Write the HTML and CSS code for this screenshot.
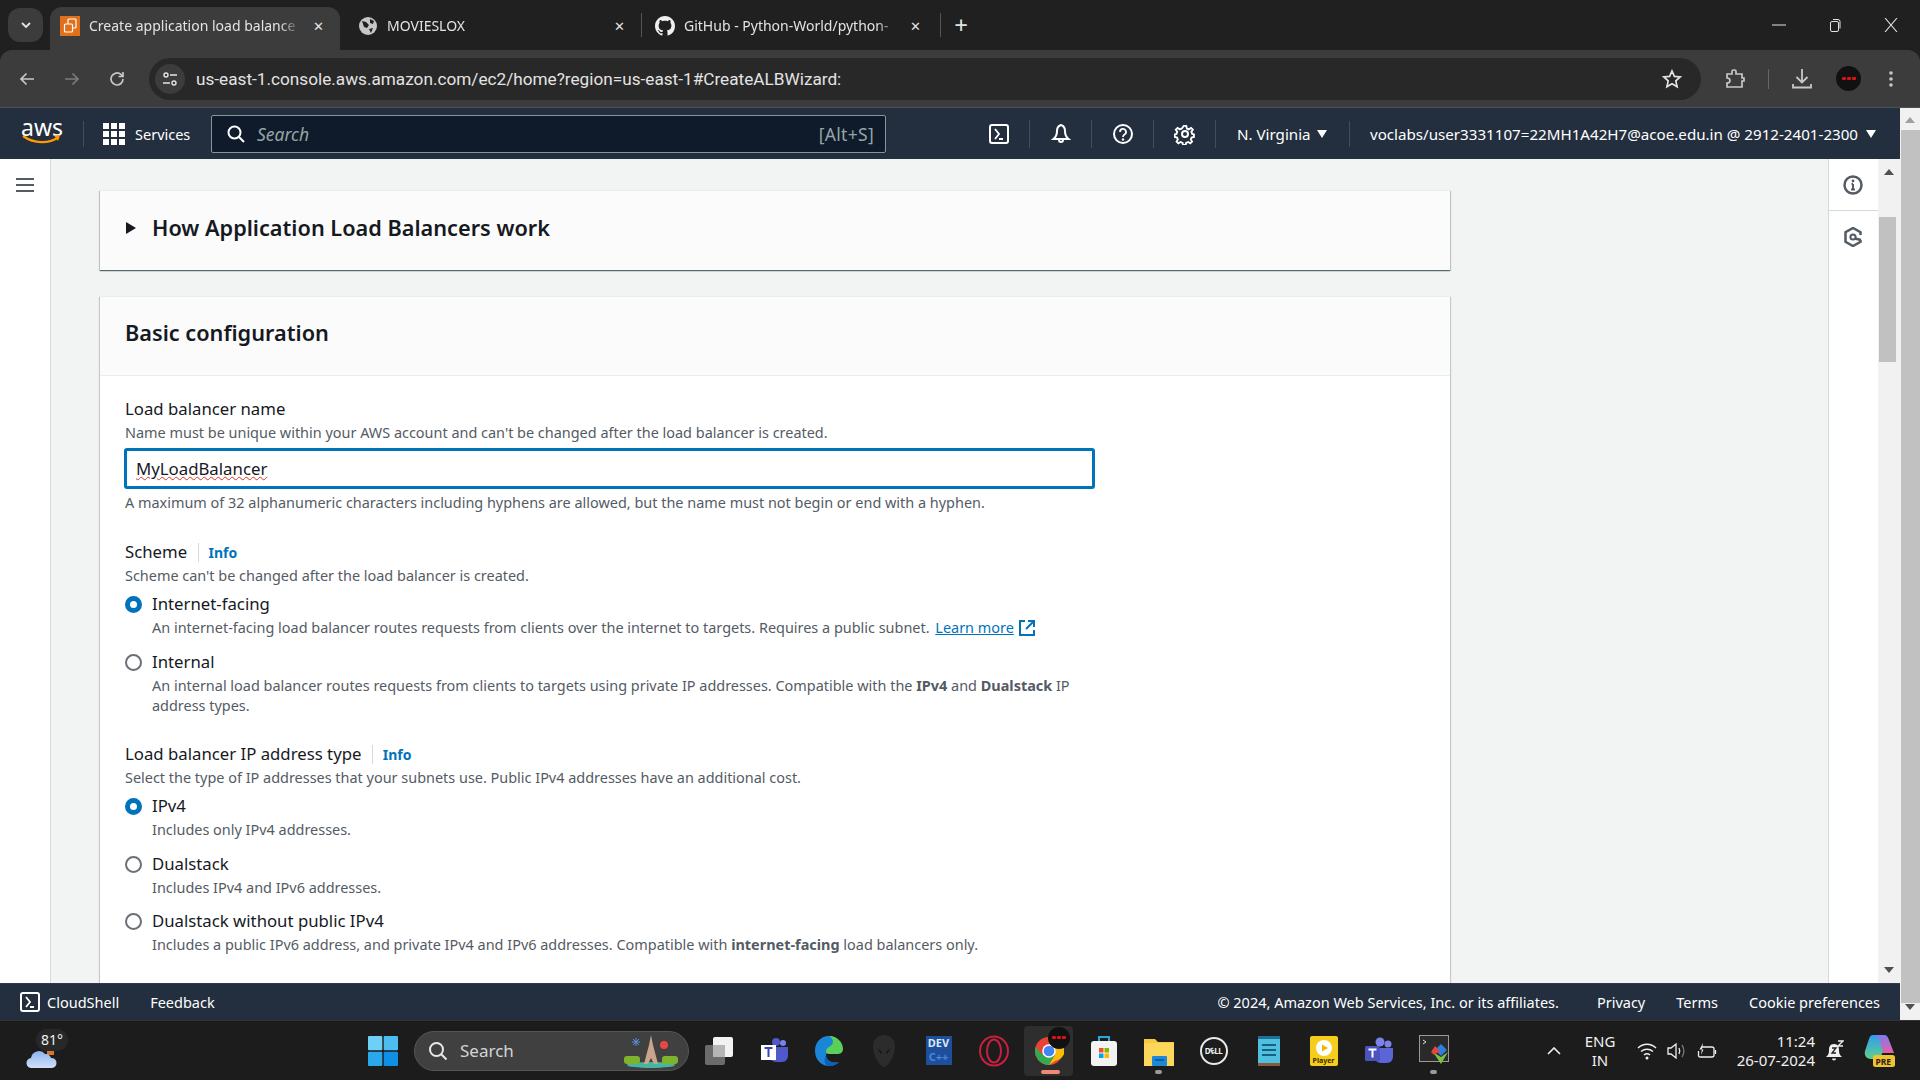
FILE: index.html
```html
<!DOCTYPE html>
<html lang="en">
<head>
    <meta charset="UTF-8">
    <title>Create application load balancer</title>
    <link rel="stylesheet" href="styles.css">
</head>
<body>
    <!-- browser tabs -->
    <div class="tabstrip">
        <div class="tab-search"><svg width="12" height="12" viewBox="0 0 12 12"><path d="M2 4l4 4 4-4" fill="none" stroke="#e3e3e3" stroke-width="1.8"/></svg></div>
        <div class="tab tab-active">
            <svg class="tab-icon" width="20" height="20" viewBox="0 0 20 20"><rect width="20" height="20" fill="#e0701a"/><rect x="8" y="3" width="8" height="9" rx="1" fill="none" stroke="#fff" stroke-width="1.2"/><rect x="4.5" y="8" width="8" height="8" rx="1" fill="#e0701a" stroke="#fff" stroke-width="1.2"/></svg>
            <span class="tab-title">Create application load balance</span>
            <span class="tab-close">✕</span>
        </div>
        <div class="tab tab-second">
            <svg class="tab-icon" width="20" height="20" viewBox="0 0 20 20"><circle cx="10" cy="10" r="9" fill="#c4c7c5"/><path d="M4 5l4 1 3 3-2 3-3-1zM12 3l4 2-1 3-3-1zM11 13l4-1-2 5z" fill="#202020"/></svg>
            <span class="tab-title">MOVIESLOX</span>
            <span class="tab-close">✕</span>
        </div>
        <div class="tab-sep"></div>
        <div class="tab tab-narrow">
            <svg class="tab-icon" width="20" height="20" viewBox="0 0 16 16"><path fill="#f0f0f0" d="M8 0C3.58 0 0 3.58 0 8c0 3.54 2.29 6.53 5.47 7.59.4.07.55-.17.55-.38 0-.19-.01-.82-.01-1.49-2.01.37-2.53-.49-2.69-.94-.09-.23-.48-.94-.82-1.13-.28-.15-.68-.52-.01-.53.63-.01 1.08.58 1.23.82.72 1.21 1.87.87 2.33.66.07-.52.28-.87.51-1.07-1.78-.2-3.64-.89-3.64-3.95 0-.87.31-1.59.82-2.15-.08-.2-.36-1.02.08-2.12 0 0 .67-.21 2.2.82.64-.18 1.32-.27 2-.27s1.36.09 2 .27c1.53-1.04 2.2-.82 2.2-.82.44 1.1.16 1.92.08 2.12.51.56.82 1.27.82 2.15 0 3.07-1.87 3.75-3.65 3.95.29.25.54.73.54 1.48 0 1.07-.01 1.93-.01 2.2 0 .21.15.46.55.38A8 8 0 0 0 16 8c0-4.42-3.58-8-8-8z"/></svg>
            <span class="tab-title">GitHub - Python-World/python-</span>
            <span class="tab-close">✕</span>
        </div>
        <div class="tab-sep"></div>
        <div class="tab-new">+</div>
        <div class="window-btns">
            <svg width="14" height="14" viewBox="0 0 14 14"><path d="M0 7h14" stroke="#e3e3e3"/></svg>
            <svg width="14" height="14" viewBox="0 0 14 14"><rect x="2.5" y="3.5" width="8" height="10" rx="1.5" fill="none" stroke="#e3e3e3"/><path d="M5 1.5h5a2 2 0 0 1 2 2v7" fill="none" stroke="#e3e3e3"/></svg>
            <svg width="14" height="14" viewBox="0 0 14 14"><path d="M1 0l12 14M13 0L1 14" stroke="#e3e3e3" stroke-width="1.1"/></svg>
        </div>
    </div>

    <!-- address bar -->
    <div class="toolbar">
        <svg class="tool-btn" width="18" height="18" viewBox="0 0 18 18"><path d="M16 9H3M8.5 3.5L3 9l5.5 5.5" fill="none" stroke="#c7c7c7" stroke-width="1.7"/></svg>
        <svg class="tool-btn" width="18" height="18" viewBox="0 0 18 18"><path d="M2 9h13M9.5 3.5L15 9l-5.5 5.5" fill="none" stroke="#7c7c7c" stroke-width="1.7"/></svg>
        <svg class="tool-btn" width="18" height="18" viewBox="0 0 18 18"><path d="M15 9a6 6 0 1 1-2-4.5L15 6.5M15 2v4.5h-4.5" fill="none" stroke="#c7c7c7" stroke-width="1.7"/></svg>
        <div class="urlbar">
            <div class="url-chip"><svg width="16" height="16" viewBox="0 0 16 16"><circle cx="4" cy="4" r="2" fill="none" stroke="#e3e3e3" stroke-width="1.4"/><path d="M8 4h7M1 12h7" stroke="#e3e3e3" stroke-width="1.4"/><circle cx="12" cy="12" r="2" fill="none" stroke="#e3e3e3" stroke-width="1.4"/></svg></div>
            <span class="url-text">us-east-1.console.aws.amazon.com/ec2/home?region=us-east-1#CreateALBWizard:</span>
            <svg class="url-star" width="20" height="20" viewBox="0 0 20 20"><path d="M10 2l2.4 5.4 5.8.6-4.4 3.9 1.3 5.8L10 14.7l-5.1 3 1.3-5.8L1.800 8l5.800-.6z" fill="none" stroke="#e3e3e3" stroke-width="1.7"/></svg>
        </div>
        <svg class="ext-icon" width="20" height="22" viewBox="0 0 20 22"><path d="M2 6h5V3.500a1.500 1.500 0 0 1 1.500-1.500h1A1.500 1.500 0 0 1 11 3.500V6h6v4h2v3h-2v6H2v-4c2 0 3-1 3-2.500S4 10 2 10z" fill="none" stroke="#c7c7c7" stroke-width="1.700"/></svg>
        <div class="tool-sep"></div>
        <svg class="dl-icon" width="20" height="22" viewBox="0 0 20 22"><path d="M10 1v13M4.500 9l5.500 5.500L15.500 9M1 16v3.500h18V16" fill="none" stroke="#c7c7c7" stroke-width="1.800"/></svg>
        <div class="avatar"><i></i><i></i><i></i></div>
        <svg class="menu-icon" width="4" height="18" viewBox="0 0 4 18"><circle cx="2" cy="3" r="1.800" fill="#c7c7c7"/><circle cx="2" cy="9" r="1.800" fill="#c7c7c7"/><circle cx="2" cy="15" r="1.800" fill="#c7c7c7"/></svg>
    </div>

    <div class="viewport">
        <div class="console">
            <!-- aws top nav -->
            <nav class="topnav">
                <div class="aws-logo">
                    <span>aws</span>
                    <svg width="40" height="10" viewBox="0 0 40 10"><path d="M1 1c11 8 26 8 36 1" fill="none" stroke="#f90" stroke-width="2.200"/><path d="M32 0.500l6-.5-2 6z" fill="#f90"/></svg>
                </div>
                <div class="nav-sep nav-sep-logo"></div>
                <div class="services">
                    <svg width="22" height="22" viewBox="0 0 22 22" fill="#fff"><rect width="6" height="6"/><rect x="8" width="6" height="6"/><rect x="16" width="6" height="6"/><rect y="8" width="6" height="6"/><rect x="8" y="8" width="6" height="6"/><rect x="16" y="8" width="6" height="6"/><rect y="16" width="6" height="6"/><rect x="8" y="16" width="6" height="6"/><rect x="16" y="16" width="6" height="6"/></svg>
                    <span>Services</span>
                </div>
                <div class="nav-search">
                    <svg width="18" height="18" viewBox="0 0 18 18"><circle cx="7.500" cy="7.500" r="6" fill="none" stroke="#fff" stroke-width="2"/><path d="M12 12l5 5" stroke="#fff" stroke-width="2"/></svg>
                    <span class="search-text">Search</span>
                    <span class="search-key">[Alt+S]</span>
                </div>
                <div class="nav-icon"><svg width="20" height="20" viewBox="0 0 20 20"><rect x="1" y="1" width="18" height="18" rx="2" fill="none" stroke="#fff" stroke-width="2"/><path d="M6 5l4 5-4 5M10 15h4" fill="none" stroke="#fff" stroke-width="1.800"/></svg></div>
                <div class="nav-icon"><svg width="20" height="22" viewBox="0 0 20 22"><path d="M10 2c-3 1-4 3-4 6 0 4-1 6-3.500 8h15C15 14 14 12 14 8c0-3-1-5-4-6zM8 17a2 2 0 0 0 4 0" fill="none" stroke="#fff" stroke-width="2"/></svg></div>
                <div class="nav-icon"><svg width="20" height="20" viewBox="0 0 20 20"><circle cx="10" cy="10" r="9" fill="none" stroke="#fff" stroke-width="2"/><path d="M7 8a3 3 0 1 1 4.500 2.500c-1 .6-1.500 1-1.500 2.500" fill="none" stroke="#fff" stroke-width="1.800"/><circle cx="10" cy="15.500" r="1.200" fill="#fff"/></svg></div>
                <div class="nav-icon"><svg width="22" height="22" viewBox="0 0 22 22"><circle cx="11" cy="11" r="3" fill="none" stroke="#fff" stroke-width="2"/><path d="M9.500 1.500h3l.6 3 2.400 1 2.600-1.700 2.100 2.100-1.700 2.600 1 2.400 2 .6v3l-2.700.6-1 2.400 1.500 2.400-2.100 2.100-2.500-1.600-2.400 1-.6 2.600h-3l-.6-2.600-2.400-1-2.500 1.600-2.100-2.100 1.500-2.400-1-2.400-2.700-.6v-3l2-.6 1-2.400-1.700-2.600 2.100-2.100 2.600 1.700 2.400-1z" transform="translate(1.650 1.650) scale(.85)" fill="none" stroke="#fff" stroke-width="2.200"/></svg></div>
                <div class="nav-drop nav-region"><span>N. Virginia</span><i class="caret"></i></div>
                <div class="nav-sep"></div>
                <div class="nav-drop nav-user"><span>voclabs/user3331107=22MH1A42H7@acoe.edu.in @ 2912-2401-2300</span><i class="caret"></i></div>
            </nav>

            <div class="console-body">
                <aside class="left-rail">
                    <svg width="18" height="16" viewBox="0 0 18 16"><path d="M0 2h18M0 8h18M0 14h18" stroke="#545b64" stroke-width="2"/></svg>
                </aside>
                <main class="content">
                    <section class="card card-collapsed">
                        <i class="arrow-right"></i>
                        <h2>How Application Load Balancers work</h2>
                    </section>
                    <section class="card">
                        <header class="card-head"><h2>Basic configuration</h2></header>
                        <div class="card-body">
                            <div class="field-label">Load balancer name</div>
                            <div class="field-desc">Name must be unique within your AWS account and can't be changed after the load balancer is created.</div>
                            <div class="text-input"><span class="misspelled">MyLoadBalancer</span></div>
                            <div class="field-hint">A maximum of 32 alphanumeric characters including hyphens are allowed, but the name must not begin or end with a hyphen.</div>

                            <div class="field-label group-label">Scheme <a class="info">Info</a></div>
                            <div class="field-desc">Scheme can't be changed after the load balancer is created.</div>
                            <div class="radio-row radio-first">
                                <i class="radio radio-on"></i>
                                <div>
                                    <div class="radio-label">Internet-facing</div>
                                    <div class="radio-desc">An internet-facing load balancer routes requests from clients over the internet to targets. Requires a public subnet. <a class="learn">Learn more</a> <svg class="ext-link" width="18" height="18" viewBox="0 0 18 18"><path d="M7 2H2v14h14v-5M10 2h6v6M16 2L8 10" fill="none" stroke="#0073bb" stroke-width="2"/></svg></div>
                                </div>
                            </div>
                            <div class="radio-row">
                                <i class="radio"></i>
                                <div>
                                    <div class="radio-label">Internal</div>
                                    <div class="radio-desc">An internal load balancer routes requests from clients to targets using private IP addresses. Compatible with the <b>IPv4</b> and <b>Dualstack</b> IP address types.</div>
                                </div>
                            </div>

                            <div class="field-label group-label-2">Load balancer IP address type <a class="info">Info</a></div>
                            <div class="field-desc">Select the type of IP addresses that your subnets use. Public IPv4 addresses have an additional cost.</div>
                            <div class="radio-row radio-first">
                                <i class="radio radio-on"></i>
                                <div>
                                    <div class="radio-label">IPv4</div>
                                    <div class="radio-desc">Includes only IPv4 addresses.</div>
                                </div>
                            </div>
                            <div class="radio-row">
                                <i class="radio"></i>
                                <div>
                                    <div class="radio-label">Dualstack</div>
                                    <div class="radio-desc">Includes IPv4 and IPv6 addresses.</div>
                                </div>
                            </div>
                            <div class="radio-row">
                                <i class="radio"></i>
                                <div>
                                    <div class="radio-label">Dualstack without public IPv4</div>
                                    <div class="radio-desc">Includes a public IPv6 address, and private IPv4 and IPv6 addresses. Compatible with <b>internet-facing</b> load balancers only.</div>
                                </div>
                            </div>
                        </div>
                    </section>
                </main>
                <aside class="right-rail">
                    <div class="rail-btn rail-btn-first"><svg width="20" height="20" viewBox="0 0 20 20"><circle cx="10" cy="10" r="8.500" fill="none" stroke="#545b64" stroke-width="2.500"/><circle cx="10" cy="6" r="1.400" fill="#545b64"/><path d="M10 9v5M8 14.500h4M8.500 9H10" stroke="#545b64" stroke-width="2"/></svg></div>
                    <div class="rail-btn"><svg width="18" height="20" viewBox="0 0 18 20"><path d="M16.500 13v1.800L9 19l-7.500-4.200V5.200L9 1l7.500 4.200V8" fill="none" stroke="#545b64" stroke-width="2.500"/><circle cx="9" cy="10" r="2.600" fill="none" stroke="#545b64" stroke-width="2"/><path d="M11 11.500l6 1.500" stroke="#545b64" stroke-width="2.400"/></svg></div>
                </aside>
                <div class="inner-scroll">
                    <i class="sb-up"></i>
                    <div class="inner-thumb"></div>
                    <i class="sb-down"></i>
                </div>
            </div>

            <footer class="console-foot">
                <svg width="20" height="20" viewBox="0 0 20 20"><rect x="1" y="1" width="18" height="18" rx="2" fill="none" stroke="#fff" stroke-width="2"/><path d="M6 5l4 5-4 5M10 15h4" fill="none" stroke="#fff" stroke-width="1.800"/></svg>
                <span class="foot-shell">CloudShell</span>
                <span class="foot-feedback">Feedback</span>
                <span class="foot-copy">© 2024, Amazon Web Services, Inc. or its affiliates.</span>
                <span class="foot-link foot-privacy">Privacy</span>
                <span class="foot-link">Terms</span>
                <span class="foot-link foot-last">Cookie preferences</span>
            </footer>
        </div>
        <div class="outer-scroll">
            <i class="sb-up"></i>
            <div class="outer-thumb"></div>
            <i class="sb-down"></i>
        </div>
    </div>

    <!-- windows taskbar -->
    <div class="taskbar">
        <div class="weather">
            <svg width="32" height="20" viewBox="0 0 32 20"><defs><linearGradient id="cloudFill" x1="0" y1="0" x2="0" y2="1"><stop offset="0" stop-color="#8fb4ee"/><stop offset="1" stop-color="#cfe0fa"/></linearGradient></defs><rect x="21" y="0" width="7" height="6" fill="#d9762b"/><path d="M6 19a5 5 0 0 1-1-10 8 8 0 0 1 14-4 6 6 0 0 1 6 4 5 5 0 0 1 1 10z" fill="url(#cloudFill)"/></svg>
            <span class="weather-temp">81°</span>
        </div>
        <svg class="win-logo" width="30" height="30" viewBox="0 0 30 30"><rect width="14.300" height="14.300" rx="1" fill="#6fd0f5"/><rect x="15.700" width="14.300" height="14.300" rx="1" fill="#4dbdf0"/><rect y="15.700" width="14.300" height="14.300" rx="1" fill="#2aa8ec"/><rect x="15.700" y="15.700" width="14.300" height="14.300" rx="1" fill="#0f8fe6"/></svg>
        <div class="task-search">
            <svg width="20" height="20" viewBox="0 0 20 20"><circle cx="8.500" cy="8.500" r="6.500" fill="none" stroke="#e8e8e8" stroke-width="2"/><path d="M13 13l5.500 5.500" stroke="#e8e8e8" stroke-width="2"/></svg>
            <span>Search</span>
            <svg class="doodle" width="56" height="34" viewBox="0 0 56 34"><ellipse cx="28" cy="31" rx="24" ry="3" fill="#48b5a0"/><rect x="1" y="22" width="16" height="8" rx="3" fill="#7fb32e"/><rect x="39" y="22" width="16" height="8" rx="3" fill="#7fb32e"/><path d="M28 1l2 10 5 19h-4l-3-6-3 6h-4l5-19z" fill="#c9a58c"/><path d="M9 8h8M13 4v8M10 5l6 6M16 5l-6 6" stroke="#5b8fd8" stroke-width="1"/><circle cx="41" cy="11" r="4" fill="#ef4444"/></svg>
        </div>
        <div class="task-apps">
            <div class="app"><svg width="30" height="30" viewBox="0 0 30 30"><rect x="1" y="9" width="20" height="20" rx="2" fill="#6b6b6b"/><rect x="9" y="1" width="20" height="20" rx="2" fill="#f2f2f2"/><rect x="9" y="9" width="12" height="12" fill="#b5b5b5"/></svg></div>
            <div class="app"><svg width="30" height="30" viewBox="0 0 30 30"><circle cx="24" cy="7" r="3" fill="#7b83eb"/><circle cx="17" cy="6" r="4" fill="#5059c9"/><path d="M10 11h19v9a6 6 0 0 1-6 6h-6a7 7 0 0 1-7-7z" fill="#5059c9"/><rect x="2" y="9" width="15" height="15" fill="#fff"/><path d="M5.500 12h8M9.500 12v9" stroke="#3b44b0" stroke-width="2"/></svg></div>
            <div class="app"><svg width="30" height="32" viewBox="0 0 30 32"><path d="M15 1C6 1 1 8 1 16c0 9 7 15 14 15 5 0 8-2 10-4-6 2-13-1-13-7 0-2 1-3 3-3h13C29 8 24 1 15 1z" fill="#1b86d8"/><path d="M15 1c8 0 14 6 14 13 0 4-3 5-6 5h-8c-2 0-3-1-3-2 0-6 7-5 7-10 0-3-2-5-4-6z" fill="#5ad05a"/><path d="M12 20c0 6 7 9 13 7-2 2-5 4-10 4-4 0-6-5-3-11z" fill="#0f5fb5"/></svg></div>
            <div class="app"><svg width="24" height="34" viewBox="0 0 24 34"><path d="M12 1c7 0 11 5 11 12 0 8-6 19-11 20C7 32 1 21 1 13 1 6 5 1 12 1z" fill="#2c2c2c"/><path d="M5 14l5 4-1 2zM19 14l-5 4 1 2z" fill="#161616"/></svg></div>
            <div class="app"><div class="dev-icon"><b>DEV</b><b class="dev-cpp">C++</b></div></div>
            <div class="app"><svg width="32" height="32" viewBox="0 0 32 32"><ellipse cx="16" cy="16" rx="14" ry="14.500" fill="none" stroke="#c8203f" stroke-width="2"/><ellipse cx="16" cy="16" rx="7" ry="11.500" fill="none" stroke="#c8203f" stroke-width="2"/></svg></div>
            <div class="app app-active">
                <svg width="30" height="30" viewBox="0 0 30 30"><circle cx="15" cy="15" r="14" fill="#e94335"/><path d="M15 15L2.900 22A14 14 0 0 0 15 29l6-10z" fill="#34a853"/><path d="M15 1h12.100a14 14 0 0 1-6 24L15 29l6-10z" fill="#fbbc05"/><path d="M1.500 11L9 19 3 22A14 14 0 0 1 1.500 11z" fill="#34a853"/><circle cx="15" cy="15" r="6.800" fill="#fff"/><circle cx="15" cy="15" r="5.300" fill="#4285f4"/></svg>
                <div class="chrome-badge"><i></i><i></i><i></i></div>
                <span class="app-bar"></span>
            </div>
            <div class="app"><svg width="28" height="32" viewBox="0 0 28 32"><path d="M9 6V2h10v4" fill="none" stroke="#29a8df" stroke-width="2"/><rect x="1" y="6" width="26" height="25" rx="3" fill="#f3f3f3"/><rect x="9" y="13" width="4.500" height="4.500" fill="#f25022"/><rect x="14.500" y="13" width="4.500" height="4.500" fill="#7fba00"/><rect x="9" y="18.500" width="4.500" height="4.500" fill="#00a4ef"/><rect x="14.500" y="18.500" width="4.500" height="4.500" fill="#ffb900"/></svg></div>
            <div class="app"><svg width="30" height="30" viewBox="0 0 30 30"><path d="M0 3h11l3 3h16v24H0z" fill="#f8c93c"/><path d="M0 7h30v23H0z" fill="#fbd75b"/><rect x="8" y="20" width="15" height="10" rx="1" fill="#1d88d6"/><path d="M11 24h9" stroke="#0c5fa5" stroke-width="2"/></svg><span class="app-dot"></span></div>
            <div class="app"><div class="dell-icon">D<span class="dell-e">E</span>LL</div></div>
            <div class="app"><svg width="24" height="32" viewBox="0 0 24 32"><rect x="1" y="1" width="22" height="29" fill="#4fc0e0"/><rect x="1" y="28" width="22" height="3" fill="#8a5a3c"/><path d="M1 1h22v3H1z" fill="#1d6f96"/><path d="M5 10h14M5 15h14M5 20h14" stroke="#1b5f80" stroke-width="2"/></svg></div>
            <div class="app"><div class="player-icon"><svg width="16" height="16" viewBox="0 0 16 16"><circle cx="8" cy="8" r="8" fill="#fff"/><path d="M6 4.500l6 3.500-6 3.500z" fill="#f2b600"/></svg><span>Player</span></div></div>
            <div class="app"><svg width="30" height="30" viewBox="0 0 30 30"><circle cx="24" cy="8" r="3.500" fill="#7b83eb"/><circle cx="16" cy="6" r="4.500" fill="#7b83eb"/><path d="M10 12h19v9a6 6 0 0 1-6 6h-6a7 7 0 0 1-7-7z" fill="#5b65d6"/><rect x="1" y="10" width="15" height="15" rx="1.500" fill="#4b53bc"/><path d="M4.500 13.500h8M8.500 13.500v8" stroke="#fff" stroke-width="2"/></svg></div>
            <div class="app"><svg width="30" height="32" viewBox="0 0 30 32"><rect x="0.500" y="0.500" width="29" height="26" fill="#2a2a2a" stroke="#999"/><path d="M4 5l3 2-3 2" fill="none" stroke="#ddd"/><path d="M22 9l6 6-6 6-6-6z" fill="#2f7de1"/><path d="M14 17l8 12 7-12-7 5z" fill="#7cc242"/><path d="M16 11l5 5-6 4-3-3z" fill="#e0483a"/></svg><span class="app-dot"></span></div>
        </div>
        <div class="tray">
            <svg class="tray-up" width="14" height="8" viewBox="0 0 14 8"><path d="M1 7l6-6 6 6" fill="none" stroke="#f0f0f0" stroke-width="1.600"/></svg>
            <div class="tray-lang">ENG<br>IN</div>
            <svg class="tray-icon" width="20" height="18" viewBox="0 0 20 18"><path d="M1 6c5-5 13-5 18 0M4 9.500c3.500-3 8.500-3 12 0M7 13c1.800-1.500 4.200-1.500 6 0" fill="none" stroke="#f0f0f0" stroke-width="1.400"/><circle cx="10" cy="16" r="1.500" fill="#f0f0f0"/></svg>
            <svg class="tray-icon" width="20" height="18" viewBox="0 0 20 18"><path d="M1 6h3l5-4v14l-5-4H1zM12 6c1 2 1 4 0 6" fill="none" stroke="#f0f0f0" stroke-width="1.300"/><path d="M15 3c2.500 3.500 2.500 8.500 0 12" fill="none" stroke="#777" stroke-width="1.300"/></svg>
            <svg class="tray-icon" width="20" height="18" viewBox="0 0 20 18"><path d="M5 5h10a2 2 0 0 1 2 2v6a2 2 0 0 1-2 2H3a1.500 1.500 0 0 1-1.500-1.500V9" fill="none" stroke="#f0f0f0" stroke-width="1.300"/><path d="M18.500 8v4" stroke="#f0f0f0" stroke-width="1.300"/><path d="M6 1L2.500 7.500h4L4 13z" fill="#f0f0f0"/></svg>
            <div class="tray-clock">11:24<br>26-07-2024</div>
            <svg class="tray-bell" width="18" height="22" viewBox="0 0 18 22"><path d="M8 4c-4 0-5 3-5 6 0 4-1 5-3 7h16c-2-2-3-3-3-7 0-3-1-6-5-6zM6 18.500a2 2 0 0 0 4 0z" fill="#f0f0f0"/><path d="M6 8h4l-4 5h4" fill="none" stroke="#222" stroke-width="1.300"/><path d="M12 1h5l-5 5h5" fill="none" stroke="#f0f0f0" stroke-width="1.300"/></svg>
            <svg class="copilot" width="32" height="34" viewBox="0 0 32 34"><defs><linearGradient id="copLeft" x1="0" y1="0" x2="0" y2="1"><stop offset="0" stop-color="#2f9cf0"/><stop offset="1" stop-color="#5fd08c"/></linearGradient><linearGradient id="copRight" x1="0" y1="0" x2="0" y2="1"><stop offset="0" stop-color="#7c7cf0"/><stop offset="1" stop-color="#e85fa8"/></linearGradient></defs><path d="M9 1h11c3 0 4 2 5 5l5 13H18L15 9z" fill="url(#copRight)"/><path d="M9 1c4 0 6 3 7 7l3 9-3 8H7c-5 0-7-4-6-8l4-12c1-3 2-4 4-4z" fill="url(#copLeft)"/><rect x="9" y="21" width="22" height="12" rx="2.500" fill="#f2c230"/><text x="11.500" y="30.500" font-size="8.500" font-weight="700" fill="#222" font-family="Noto Sans">PRE</text></svg>
        </div>
    </div>
</body>
</html>
```

FILE: styles.css
```css
* {
    box-sizing: border-box;
}
body {
    margin: 0;
    width: 1920px;
    height: 1080px;
    overflow: hidden;
    display: flex;
    flex-direction: column;
    font-family: "Noto Sans", sans-serif;
    background: #202020;
}

/* tabs */
.tabstrip {
    height: 50px;
    display: flex;
    align-items: flex-end;
    background: #202020;
    color: #e3e3e3;
    font-size: 14px;
    flex-shrink: 0;
}
.tab-search {
    width: 35px;
    height: 34px;
    margin: 0 7px 8px 8px;
    border-radius: 12px;
    background: #3c3c3c;
    display: flex;
    align-items: center;
    justify-content: center;
}
.tab {
    width: 292px;
    height: 43px;
    padding: 0 14px 6px 10px;
    display: flex;
    align-items: center;
    gap: 9px;
    border-radius: 12px 12px 0 0;
}
.tab-active {
    background: #3c3c3c;
    width: 290px;
}
.tab-second {
    width: 301px;
    padding-left: 18px;
}
.tab-narrow {
    width: 298px;
    padding-left: 13px;
    padding-right: 17px;
}
.tab-icon {
    flex-shrink: 0;
}
.tab-title {
    flex: 1;
    overflow: hidden;
    white-space: nowrap;
    -webkit-mask-image: linear-gradient(to right, #000 90%, transparent);
    mask-image: linear-gradient(to right, #000 90%, transparent);
}
.tab-close {
    font-size: 13px;
    width: 16px;
    text-align: center;
}
.tab-sep {
    width: 1px;
    height: 24px;
    margin-bottom: 13px;
    background: #555;
}
.tab-new {
    width: 40px;
    text-align: center;
    font-size: 24px;
    line-height: 30px;
    margin-bottom: 10px;
}
.window-btns {
    margin-left: auto;
    display: flex;
    align-items: center;
    gap: 42px;
    padding: 0 22px 0 0;
    height: 50px;
}

/* address bar */
.toolbar {
    height: 58px;
    flex-shrink: 0;
    background: #3c3c3c;
    border-radius: 12px 12px 0 0;
    display: flex;
    align-items: center;
    padding-left: 18px;
    border-bottom: 1px solid #4a5058;
}
.tool-btn {
    margin-right: 27px;
}
.urlbar {
    margin-left: -4px;
    width: 1552px;
    height: 42px;
    border-radius: 21px;
    background: #282828;
    display: flex;
    align-items: center;
    padding: 0 11px 0 6px;
    color: #e3e3e3;
    font-family: Roboto, sans-serif;
    font-size: 17.200px;
}
.url-chip {
    width: 30px;
    height: 30px;
    border-radius: 50%;
    background: #3c3c3c;
    display: flex;
    align-items: center;
    justify-content: center;
    margin-right: 11px;
}
.url-text {
    flex: 1;
    white-space: nowrap;
}
.url-star {
    margin-right: 8px;
}
.ext-icon {
    margin-left: 24px;
}
.tool-sep {
    width: 1px;
    height: 20px;
    background: #666;
    margin: 0 23px 0 23px;
}
.dl-icon {
    margin-right: 25px;
}
.avatar {
    width: 25px;
    height: 25px;
    border-radius: 50%;
    background: #111;
    display: flex;
    align-items: center;
    justify-content: center;
    gap: 1px;
    margin-right: 28px;
    margin-left: -1px;
}
.avatar i,
.chrome-badge i {
    width: 4px;
    height: 3px;
    background: #d11;
    border-radius: 1px;
}

/* console frame */
.viewport {
    flex: 1;
    display: flex;
    min-height: 0;
}
.console {
    width: 1900px;
    display: flex;
    flex-direction: column;
}
.topnav {
    height: 51px;
    flex-shrink: 0;
    background: #232f3e;
    color: #fff;
    display: flex;
    align-items: center;
    font-size: 15.150px;
}
.aws-logo {
    width: 42px;
    margin-left: 21px;
    display: flex;
    flex-direction: column;
    align-items: center;
    line-height: 20px;
    font-size: 23px;
    height: 34px;
}
.aws-logo svg {
    margin-top: -2px;
}
.nav-sep {
    width: 1px;
    height: 26px;
    background: #414d5c;
}
.nav-sep-logo {
    margin: 0 19px 0 20px;
}
.services {
    display: flex;
    align-items: center;
    gap: 10px;
    width: 108px;
    font-size: 14.500px;
}
.nav-search {
    width: 675px;
    height: 38px;
    background: #0f1b2a;
    border: 1px solid #879596;
    border-radius: 2px;
    display: flex;
    align-items: center;
    padding: 0 11px 0 15px;
    color: #95a5a6;
    font-size: 17.500px;
    margin-right: 82px;
}
.search-text {
    font-style: italic;
    margin-left: 12px;
    flex: 1;
}
.search-key {
    font-size: 17.500px;
    letter-spacing: 0.3px;
}
.nav-icon {
    width: 62px;
    display: flex;
    justify-content: center;
    border-right: 1px solid #414d5c;
    height: 28px;
    align-items: center;
}
.nav-drop {
    display: flex;
    align-items: center;
    gap: 6px;
}
.nav-region {
    width: 133px;
    padding-left: 21px;
}
.nav-user {
    padding-left: 20px;
    gap: 8px;
}
.caret {
    width: 0;
    height: 0;
    border-left: 5px solid transparent;
    border-right: 5px solid transparent;
    border-top: 8px solid #fff;
}

.console-body {
    flex: 1;
    display: flex;
    min-height: 0;
    background: #f2f3f3;
}
.left-rail {
    width: 51px;
    background: #fff;
    border-right: 1px solid #d5dbdb;
    padding: 17px 0 0 16px;
    flex-shrink: 0;
}
.content {
    width: 1777px;
    padding: 31px 0 0 49px;
    overflow: hidden;
}
.right-rail {
    width: 50px;
    flex-shrink: 0;
    background: #fff;
    border-left: 1px solid #d5dbdb;
}
.rail-btn {
    height: 51px;
    padding-right: 1px;
    display: flex;
    align-items: center;
    justify-content: center;
}
.rail-btn-first {
    border-bottom: 1px solid #d5dbdb;
    height: 52px;
}
.inner-scroll,
.outer-scroll {
    background: #f1f1f1;
    display: flex;
    flex-direction: column;
    align-items: center;
}
.inner-scroll {
    width: 22px;
}
.outer-scroll {
    width: 20px;
    height: 912px;
}
.inner-thumb {
    width: 17px;
    height: 145px;
    background: #c1c1c1;
    margin: 42px 3px 0 0;
}
.outer-thumb {
    width: 19px;
    height: 873px;
    background: #c1c1c1;
    margin: 7px 0 0 1px;
}
.sb-up,
.sb-down {
    width: 0;
    height: 0;
    border-left: 5px solid transparent;
    border-right: 5px solid transparent;
}
.sb-up {
    border-bottom: 6px solid #505050;
    margin-top: 10px;
}
.sb-down {
    border-top: 6px solid #505050;
    margin-top: auto;
    margin-bottom: 10px;
}
.outer-scroll .sb-up {
    border-bottom-color: #a0a0a0;
    margin-top: 9px;
}

/* cards */
.card {
    width: 1350px;
    background: #fff;
    border-top: 1px solid #eaeded;
    box-shadow: 0 1px 1px 0 rgba(0, 28, 36, 0.3), 1px 1px 1px 0 rgba(0, 28, 36, 0.15), -1px 1px 1px 0 rgba(0, 28, 36, 0.15);
}
.card h2 {
    margin: 0;
    font-size: 21.700px;
    font-weight: 600;
    color: #16191f;
}
.card-collapsed {
    height: 80px;
    margin-bottom: 26px;
    display: flex;
    align-items: center;
    padding: 0 0 6px 26px;
    background: #fbfbfb;
    box-shadow: 0 1px 1px 0 rgba(0, 28, 36, 0.5), 1px 1px 1px 0 rgba(0, 28, 36, 0.15), -1px 1px 1px 0 rgba(0, 28, 36, 0.15);
}
.arrow-right {
    width: 0;
    height: 0;
    border-top: 6.5px solid transparent;
    border-bottom: 6.5px solid transparent;
    border-left: 10px solid #16191f;
    margin-right: 16px;
}
.card-head {
    height: 79px;
    padding: 0 25px 7px;
    display: flex;
    align-items: center;
    background: #fbfbfb;
    border-bottom: 1px solid #eaeded;
}
.card-body {
    padding: 21px 25px 40px;
    color: #16191f;
}
.field-label {
    font-size: 16.750px;
    line-height: 24px;
    height: 24px;
}
.field-desc,
.field-hint,
.radio-desc {
    font-size: 14.440px;
    line-height: 20px;
    color: #545b64;
}
.field-desc {
    margin-top: 2px;
}
.text-input {
    width: 971px;
    height: 41px;
    margin: 5px 0 0 -1px;
    border: 3px solid #0073bb;
    border-radius: 3px;
    padding: 0 9px;
    font-size: 16.800px;
    line-height: 35px;
}
.misspelled {
    text-decoration: underline wavy #d32;
    text-decoration-thickness: 1px;
}
.field-hint {
    margin-top: 4px;
}
.group-label {
    margin-top: 27px;
}
.group-label-2 {
    margin-top: 26.500px;
}
.info {
    font-size: 14px;
    font-weight: 700;
    color: #0073bb;
    margin-left: 6px;
    padding-left: 10px;
    border-left: 1px solid #d5dbdb;
}
.radio-row {
    display: flex;
    gap: 10px;
    margin-top: 11.500px;
    width: 970px;
}
.radio-first {
    margin-top: 6px;
}
.radio {
    width: 17px;
    height: 17px;
    margin: 4px 0 0 0;
    border-radius: 50%;
    border: 2px solid #687078;
    flex-shrink: 0;
}
.radio-on {
    border: 5px solid #0073bb;
    background: #fff;
}
.radio-label {
    font-size: 16.750px;
    line-height: 24px;
}
.radio-desc {
    margin-top: 2px;
}
.radio-desc b {
    font-weight: 700;
}
.learn {
    color: #0073bb;
    text-decoration: underline;
    margin-left: 2px;
}
.ext-link {
    vertical-align: -4px;
}

/* console footer */
.console-foot {
    height: 37px;
    flex-shrink: 0;
    background: #232f3e;
    color: #fff;
    font-size: 14.500px;
    display: flex;
    align-items: center;
    padding: 0 20px;
    border-top: 1px solid #2e3b4b;
}
.foot-shell {
    margin-left: 7px;
}
.foot-feedback {
    margin-left: 31px;
}
.foot-copy {
    margin-left: auto;
}
.foot-link {
    margin-left: 31px;
}
.foot-privacy {
    margin-left: 38px;
}

/* taskbar */
.taskbar {
    height: 60px;
    flex-shrink: 0;
    display: flex;
    align-items: center;
    background: #1c1c1c;
    border-top: 1px solid #333;
    color: #f0f0f0;
}
.weather {
    width: 368px;
    padding: 27px 0 0 26px;
    height: 58px;
    position: relative;
}
.weather-temp {
    position: absolute;
    left: 36px;
    top: 7px;
    font-size: 14px;
    line-height: 22px;
    padding: 0 5px;
    border-radius: 11px;
    background: #282828;
}
.win-logo {
    flex-shrink: 0;
}
.task-search {
    width: 275px;
    height: 40px;
    margin: 0 2px 0 16px;
    border-radius: 20px;
    background: #404040;
    border: 1px solid #555;
    display: flex;
    align-items: center;
    padding: 0 9px 0 13px;
    font-size: 17px;
    color: #d4d4d4;
    flex-shrink: 0;
}
.task-search span {
    margin-left: 12px;
    flex: 1;
}
.doodle {
    flex-shrink: 0;
}
.task-apps {
    display: flex;
}
.app {
    width: 55px;
    height: 58px;
    display: flex;
    align-items: center;
    justify-content: center;
    position: relative;
}
.app-active::before {
    content: "";
    position: absolute;
    left: 3px;
    right: 3px;
    top: 4px;
    bottom: 4px;
    border-radius: 4px;
    background: #2e2e2e;
}
.app-active svg {
    position: relative;
}
.chrome-badge {
    position: absolute;
    right: 6px;
    top: 5px;
    width: 22px;
    height: 22px;
    border-radius: 50%;
    background: #111;
    display: flex;
    align-items: center;
    justify-content: center;
    gap: 1px;
}
.app-bar {
    position: absolute;
    bottom: 6px;
    left: 20px;
    width: 19px;
    height: 4px;
    border-radius: 2px;
    background: #f08a75;
}
.app-dot {
    position: absolute;
    bottom: 6px;
    left: 24px;
    width: 7px;
    height: 4px;
    border-radius: 2px;
    background: #9a9a9a;
}
.dev-icon {
    width: 26px;
    height: 29px;
    background: #1d4f9c;
    color: #dfe7f5;
    font-size: 11px;
    line-height: 14px;
    text-align: center;
    display: flex;
    flex-direction: column;
    overflow: hidden;
}
.dev-cpp {
    color: #4a86e0;
}
.dell-icon {
    width: 28px;
    height: 28px;
    border: 2px solid #e8e8e8;
    border-radius: 50%;
    font-size: 8px;
    font-weight: 700;
    line-height: 24px;
    text-align: center;
    letter-spacing: -0.5px;
}
.dell-e {
    display: inline-block;
    transform: rotate(-25deg);
}
.player-icon {
    width: 28px;
    height: 30px;
    background: #f5cd1c;
    border-radius: 2px;
    display: flex;
    flex-direction: column;
    align-items: center;
    padding-top: 4px;
    color: #3a3000;
    font-size: 7px;
    font-weight: 700;
    line-height: 9px;
}
.tray {
    display: flex;
    align-items: center;
    margin-left: auto;
    font-size: 15px;
    padding-right: 24px;
}
.tray-up {
    margin-right: 18px;
}
.tray-lang {
    width: 42px;
    text-align: center;
    line-height: 19px;
    margin-right: 16px;
}
.tray-icon {
    margin-right: 10px;
}
.tray-clock {
    width: 88px;
    text-align: right;
    line-height: 19px;
}
.tray-bell {
    margin: 0 20px 0 11px;
}
```
